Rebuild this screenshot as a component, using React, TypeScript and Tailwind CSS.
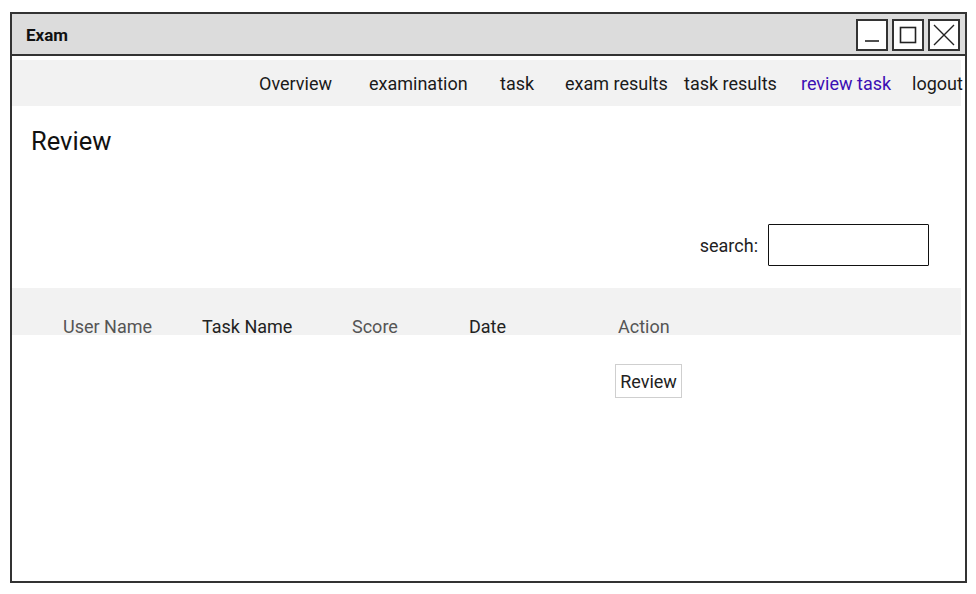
import { useState } from "react";

const navItems = [
  { label: "Overview", width: "w-[110px]" },
  { label: "examination", width: "w-[131px]" },
  { label: "task", width: "w-[65px]" },
  { label: "exam results", width: "w-[119px]" },
  { label: "task results", width: "w-[117px]" },
  { label: "review task", width: "w-[111px]", active: true },
  { label: "logout", width: "w-[60px]" },
];

const columns = [
  { label: "User Name", width: "w-[139px]", muted: true },
  { label: "Task Name", width: "w-[150px]" },
  { label: "Score", width: "w-[117px]", muted: true },
  { label: "Date", width: "w-[149px]" },
  { label: "Action", width: "w-[80px]", muted: true },
];

function WindowButton({ kind }: { kind: "min" | "max" | "close" }) {
  return (
    <div className="w-[32px] h-[32px] border-2 border-[#333] bg-white flex items-center justify-center">
      {kind === "min" && (
        <svg width="20" height="20" viewBox="0 0 20 20">
          <line x1="3" y1="16" x2="17" y2="16" stroke="#222" strokeWidth="1.6" />
        </svg>
      )}
      {kind === "max" && (
        <svg width="20" height="20" viewBox="0 0 20 20">
          <rect x="2.5" y="2.5" width="15" height="15" fill="none" stroke="#222" strokeWidth="1.6" />
        </svg>
      )}
      {kind === "close" && (
        <svg width="24" height="24" viewBox="0 0 24 24">
          <path d="M2 2 L22 22 M22 2 L2 22" stroke="#222" strokeWidth="1.4" />
        </svg>
      )}
    </div>
  );
}

export default function App() {
  const [query, setQuery] = useState("");

  return (
    <div className="w-[976px] h-[594px] bg-white pl-[10px] pt-[12px] font-['Roboto',sans-serif]">
      <div className="w-[957px] h-[571px] border-2 border-[#333] flex flex-col overflow-hidden">
        {/* Title bar */}
        <div className="h-[42px] bg-[#dcdcdc] border-b-2 border-[#333] flex items-center pl-[14px] pr-[5px] shrink-0">
          <span className="text-[17px] font-bold text-[#111] flex-1 pt-[3px]">Exam</span>
          <div className="flex gap-[4px] pt-[2px]">
            <WindowButton kind="min" />
            <WindowButton kind="max" />
            <WindowButton kind="close" />
          </div>
        </div>

        {/* Nav */}
        <div className="mt-[4px] mr-[4px] h-[46px] bg-[#f2f2f2] flex items-center pl-[247px] whitespace-nowrap text-[18px]">
          {navItems.map((item) => (
            <span
              key={item.label}
              className={`${item.width} shrink-0 ${item.active ? "text-[#3b0fb4]" : "text-[#1a1a1a]"}`}
            >
              {item.label}
            </span>
          ))}
        </div>

        {/* Heading */}
        <div className="pl-[19px] pt-[21px] text-[25.5px] leading-[28px] text-[#111]">Review</div>

        {/* Search */}
        <div className="flex items-center justify-end pr-[36px] mt-[69px]">
          <span className="text-[18px] text-[#222] mr-[10px]">search:</span>
          <input
            value={query}
            onChange={(e) => setQuery(e.target.value)}
            className="w-[161px] h-[42px] border-[1.5px] border-[#111] rounded-[1px] outline-none px-2 bg-white"
          />
        </div>

        {/* Table header */}
        <div className="mt-[22px] mr-[4px] h-[47px] bg-[#f2f2f2] flex items-end pl-[51px] text-[18px]">
          {columns.map((col) => (
            <span
              key={col.label}
              className={`${col.width} shrink-0 leading-[17px] ${col.muted ? "text-[#555]" : "text-[#222]"}`}
            >
              {col.label}
            </span>
          ))}
        </div>

        {/* Row */}
        <div className="flex pl-[603px] pt-[29px]">
          <button className="w-[67px] h-[34px] border-[1.5px] border-[#cfcfcf] bg-white text-[18px] text-[#222]">
            Review
          </button>
        </div>
      </div>
    </div>
  );
}
